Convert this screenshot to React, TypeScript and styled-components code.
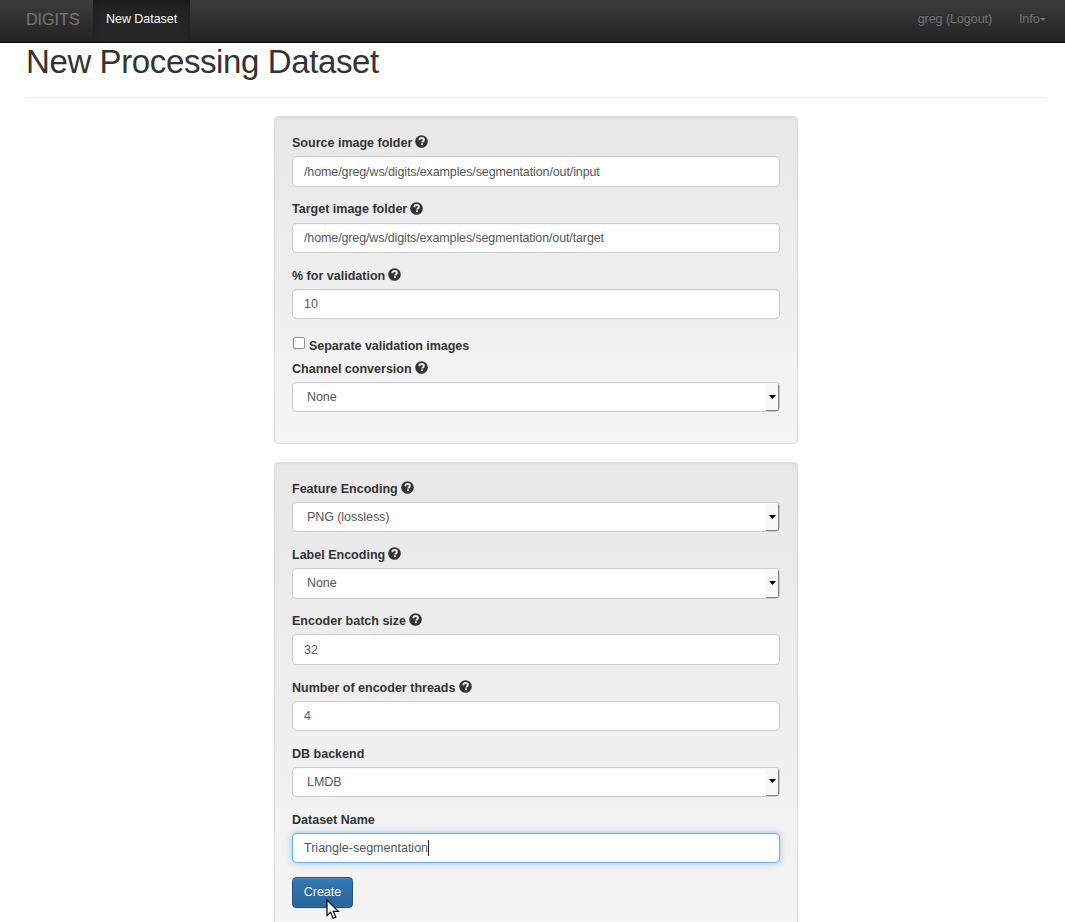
import React from "react";
import styled, { createGlobalStyle, css } from "styled-components";

const GlobalStyle = createGlobalStyle`
  *, *::before, *::after { box-sizing: border-box; }
  html { overflow: hidden; }
  body {
    margin: 0;
    height: 922px;
    overflow: hidden;
    background: #fff;
    color: #333;
    font-family: "Liberation Sans", Arial, sans-serif;
    font-size: 12.52px;
    line-height: 17.9px;
  }
`;

const Navbar = styled.nav`
  display: flex;
  height: 43px;
  padding: 0 5.5px 0 13px;
  border-bottom: 1px solid #080808;
  background: linear-gradient(to bottom, #3c3c3c 0%, #222 100%);
`;

const Brand = styled.a`
  padding: 11px 13.5px 0 13px;
  width: 80px;
  font-size: 16.1px;
  color: #777;
  white-space: nowrap;
`;

const NavLink = styled.a<{ $active?: boolean }>`
  display: flex;
  align-items: flex-start;
  height: 42px;
  padding: 11px 13.4px 0;
  color: #777;
  white-space: nowrap;
  letter-spacing: -0.05px;
  text-shadow: 0 -1px 0 rgba(0, 0, 0, 0.25);
  ${(p) =>
    p.$active &&
    css`
      width: 97px;
      padding-left: 13px;
      color: #fff;
      background: linear-gradient(to bottom, #222 0%, #282828 100%);
      box-shadow: inset 0 3px 9px rgba(0, 0, 0, 0.25);
    `}
`;

const NavRight = styled.div`
  display: flex;
  margin-left: auto;
`;

const Caret = styled.span`
  margin-top: 7px;
  margin-left: 0.5px;
  border-top: 3px solid #777;
  border-left: 3px solid transparent;
  border-right: 3px solid transparent;
`;

const Page = styled.main`
  padding: 0 19px 0 26px;
`;

const Title = styled.h1`
  margin: 0 0 18px;
  height: 55px;
  border-bottom: 1px solid #eee;
  font-size: 33px;
  font-weight: 400;
  letter-spacing: -0.39px;
  line-height: 37px;
`;

const FormColumn = styled.form`
  width: 524px;
  margin-left: 248px;
`;

const Well = styled.section`
  margin-bottom: 17.9px;
  padding: 17px;
  border: 1px solid #dcdcdc;
  border-radius: 4px;
  background: linear-gradient(to bottom, #e8e8e8 0%, #f5f5f5 100%);
  box-shadow: inset 0 1px 3px rgba(0, 0, 0, 0.05);
`;

const Group = styled.div`
  margin-bottom: 13.45px;
`;

const Label = styled.label`
  display: flex;
  align-items: flex-start;
  height: 17.9px;
  margin-bottom: 4.47px;
  padding-top: 1.3px;
  font-weight: 700;
  white-space: nowrap;
`;

const HelpSvg = styled.svg`
  margin: 0.1px 0 0 3.1px;
  width: 13px;
  height: 13px;
`;

const controlBox = css`
  display: flex;
  width: 100%;
  height: 30.4px;
  border: 1px solid #ccc;
  border-radius: 4px;
  background: #fff;
  color: #555;
`;

const Control = styled.div<{ $focused?: boolean; $tracking?: number }>`
  ${controlBox}
  align-items: center;
  padding: 1.8px 11px 0;
  letter-spacing: ${(p) => p.$tracking ?? 0}px;
  box-shadow: inset 0 1px 1px rgba(0, 0, 0, 0.03);
  ${(p) =>
    p.$focused &&
    css`
      border-color: #66afe9;
      box-shadow: inset 0 1px 1px rgba(0, 0, 0, 0.03), 0 0 7px rgba(102, 175, 233, 0.6);
    `}
`;

const TextCursor = styled.span`
  width: 1px;
  height: 16px;
  margin-top: -3px;
  background: #222;
`;

const SelectBox = styled.div`
  ${controlBox}
  justify-content: space-between;
  overflow: hidden;
  box-shadow: inset 0 1px 1px rgba(0, 0, 0, 0.03);
`;

const SelectValue = styled.span`
  padding: 5.8px 0 0 14px;
  letter-spacing: -0.08px;
`;

const SelectButton = styled.span`
  display: flex;
  align-items: center;
  justify-content: center;
  width: 13px;
  background: #f8f8f7;
  border-right: 1px solid #808080;
  border-bottom: 1px solid #808080;
`;

const CheckRow = styled.label`
  display: flex;
  align-items: flex-start;
  height: 27px;
  padding-top: 4.5px;
  font-weight: 700;
`;

const CheckBox = styled.span`
  width: 12px;
  height: 12px;
  margin: 0 4px 0 1px;
  border: 1px solid #8c8c8c;
  border-radius: 2px;
  background: #fff;
`;

const CheckText = styled.span`
  padding-top: 1px;
  letter-spacing: -0.05px;
`;

const CreateButton = styled.button`
  display: block;
  width: 61px;
  height: 31px;
  padding: 1px 0 0;
  border: 1px solid #245580;
  border-radius: 4px;
  background: linear-gradient(to bottom, #337ab7 0%, #2a689d 80%);
  box-shadow: inset 0 1px 0 rgba(255, 255, 255, 0.15), 0 1px 1px rgba(0, 0, 0, 0.075);
  color: #fff;
  font: inherit;
  text-shadow: 0 -1px 0 rgba(0, 0, 0, 0.2);
`;

const SubmitArea = styled.div`
  position: relative;
  height: 45px;
`;

const Pointer = styled.svg`
  position: absolute;
  left: 33.5px;
  top: 22px;
  width: 14px;
  height: 21px;
`;

const HelpIcon = () => (
  <HelpSvg viewBox="0 0 13 13">
    <circle cx="6.5" cy="6.5" r="6.3" fill="#333" />
    <path d="M4.3 5.2C4.3 3.7 5.2 3 6.6 3s2.3.8 2.3 1.9c0 1.5-1.7 1.5-1.7 2.5" fill="none" stroke="#eaeaea" strokeWidth="1.9" />
    <rect x="6" y="8.3" width="2" height="1.8" fill="#eaeaea" />
  </HelpSvg>
);

type FieldProps = {
  label: string;
  value: string;
  help?: boolean;
  focused?: boolean;
  tracking?: number;
};

const FieldLabel = ({ label, help }: { label: string; help?: boolean }) => (
  <Label>
    {label}
    {help && <HelpIcon />}
  </Label>
);

const TextField = ({ label, value, help, focused, tracking }: FieldProps) => (
  <Group>
    <FieldLabel label={label} help={help} />
    <Control $focused={focused} $tracking={tracking}>
      {value}
      {focused && <TextCursor />}
    </Control>
  </Group>
);

const SelectField = ({ label, value, help }: FieldProps) => (
  <Group>
    <FieldLabel label={label} help={help} />
    <SelectBox>
      <SelectValue>{value}</SelectValue>
      <SelectButton>
        <svg width="7" height="4" viewBox="0 0 7 4">
          <path d="M0 0h7L3.5 4z" fill="#000" />
        </svg>
      </SelectButton>
    </SelectBox>
  </Group>
);

export default function App() {
  return (
    <>
      <GlobalStyle />
      <Navbar>
        <Brand>DIGITS</Brand>
        <NavLink $active>New Dataset</NavLink>
        <NavRight>
          <NavLink>greg (Logout)</NavLink>
          <NavLink>
            Info
            <Caret />
          </NavLink>
        </NavRight>
      </Navbar>
      <Page>
        <Title>New Processing Dataset</Title>
        <FormColumn>
          <Well>
            <TextField
              label="Source image folder"
              value="/home/greg/ws/digits/examples/segmentation/out/input"
              help
              tracking={-0.12}
            />
            <TextField
              label="Target image folder"
              value="/home/greg/ws/digits/examples/segmentation/out/target"
              help
              tracking={-0.13}
            />
            <TextField label="% for validation" value="10" help />
            <CheckRow>
              <CheckBox />
              <CheckText>Separate validation images</CheckText>
            </CheckRow>
            <SelectField label="Channel conversion" value="None" help />
          </Well>
          <Well>
            <SelectField label="Feature Encoding" value="PNG (lossless)" help />
            <SelectField label="Label Encoding" value="None" help />
            <TextField label="Encoder batch size" value="32" help />
            <TextField label="Number of encoder threads" value="4" help />
            <SelectField label="DB backend" value="LMDB" />
            <TextField label="Dataset Name" value="Triangle-segmentation" focused />
            <SubmitArea>
              <CreateButton type="button">Create</CreateButton>
              <Pointer viewBox="0 0 14 21">
                <path d="M1 1v15.5l3.6-3.3 2.5 6 2.7-1.1-2.5-5.8h5z" fill="#fff" stroke="#000" strokeWidth="1.2" />
              </Pointer>
            </SubmitArea>
          </Well>
        </FormColumn>
      </Page>
    </>
  );
}
